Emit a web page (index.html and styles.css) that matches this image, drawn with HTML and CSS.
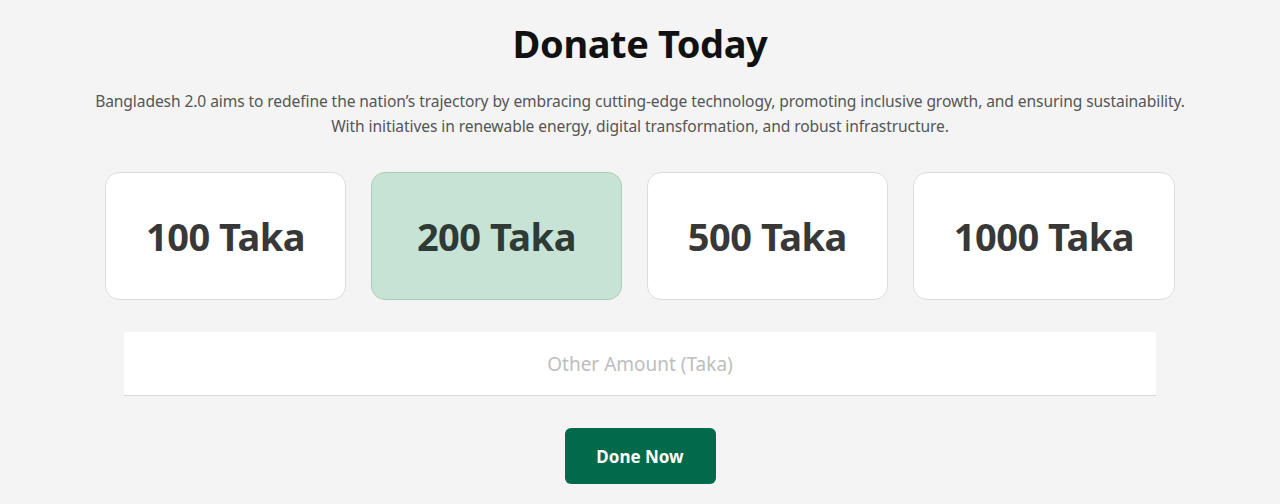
FILE: index.html
```html
<!DOCTYPE html>
<html lang="en">
<head>
<meta charset="utf-8">
<title>Donate Today</title>
<link rel="stylesheet" href="styles.css">
</head>
<body>
<section class="donate">
  <h1 class="donate-title">Donate Today</h1>
  <p class="donate-text">Bangladesh 2.0 aims to redefine the nation’s trajectory by embracing cutting-edge technology, promoting inclusive growth, and ensuring sustainability.<br>With initiatives in renewable energy, digital transformation, and robust infrastructure.</p>
  <div class="amounts">
    <button class="amount">100 Taka</button>
    <button class="amount amount-active">200 Taka</button>
    <button class="amount">500 Taka</button>
    <button class="amount">1000 Taka</button>
  </div>
  <input class="other" type="text" placeholder="Other Amount (Taka)">
  <button class="submit">Done Now</button>
</section>
</body>
</html>
```
FILE: styles.css
```css
html, body {
  margin: 0;
  padding: 0;
  background: #f4f4f4;
}
body {
  font-family: "Noto Sans", "Open Sans", sans-serif;
  color: #333;
}
.donate {
  display: flex;
  flex-direction: column;
  align-items: center;
  padding-top: 17px;
}
.donate-title {
  margin: 0;
  font-size: 38px;
  line-height: 52px;
  font-weight: 700;
  color: #111;
  letter-spacing: -0.4px;
}
.donate-text {
  margin: 20px 0 0;
  font-size: 15.6px;
  line-height: 25px;
  color: #555;
  text-align: center;
  letter-spacing: -0.1px;
}
.amounts {
  display: flex;
  gap: 25px;
  width: 1070px;
  margin-top: 33px;
}
.amount {
  flex: 1 1 auto;
  height: 128px;
  background: #fff;
  border: 1px solid #dcdcdc;
  border-radius: 14px;
  font-family: inherit;
  font-size: 38px;
  font-weight: 700;
  color: #383838;
  padding: 0 30px;
  letter-spacing: -0.5px;
}
.amount-active {
  background: #c6e3d6;
  border-color: #a9cdbc;
  color: #2f3a35;
  padding: 0 35px;
}
.other {
  margin-top: 32px;
  width: 1032px;
  height: 64px;
  box-sizing: border-box;
  border: 0;
  border-bottom: 1px solid #d8d8d8;
  background: #fff;
  text-align: center;
  font-family: inherit;
  font-size: 19px;
  outline: none;
}
.other::placeholder {
  color: #bdbdbd;
}
.submit {
  margin-top: 32px;
  width: 151px;
  height: 56px;
  border: 0;
  border-radius: 6px;
  background: #016a4b;
  color: #fff;
  font-family: inherit;
  font-size: 17px;
  font-weight: 700;
}
```
